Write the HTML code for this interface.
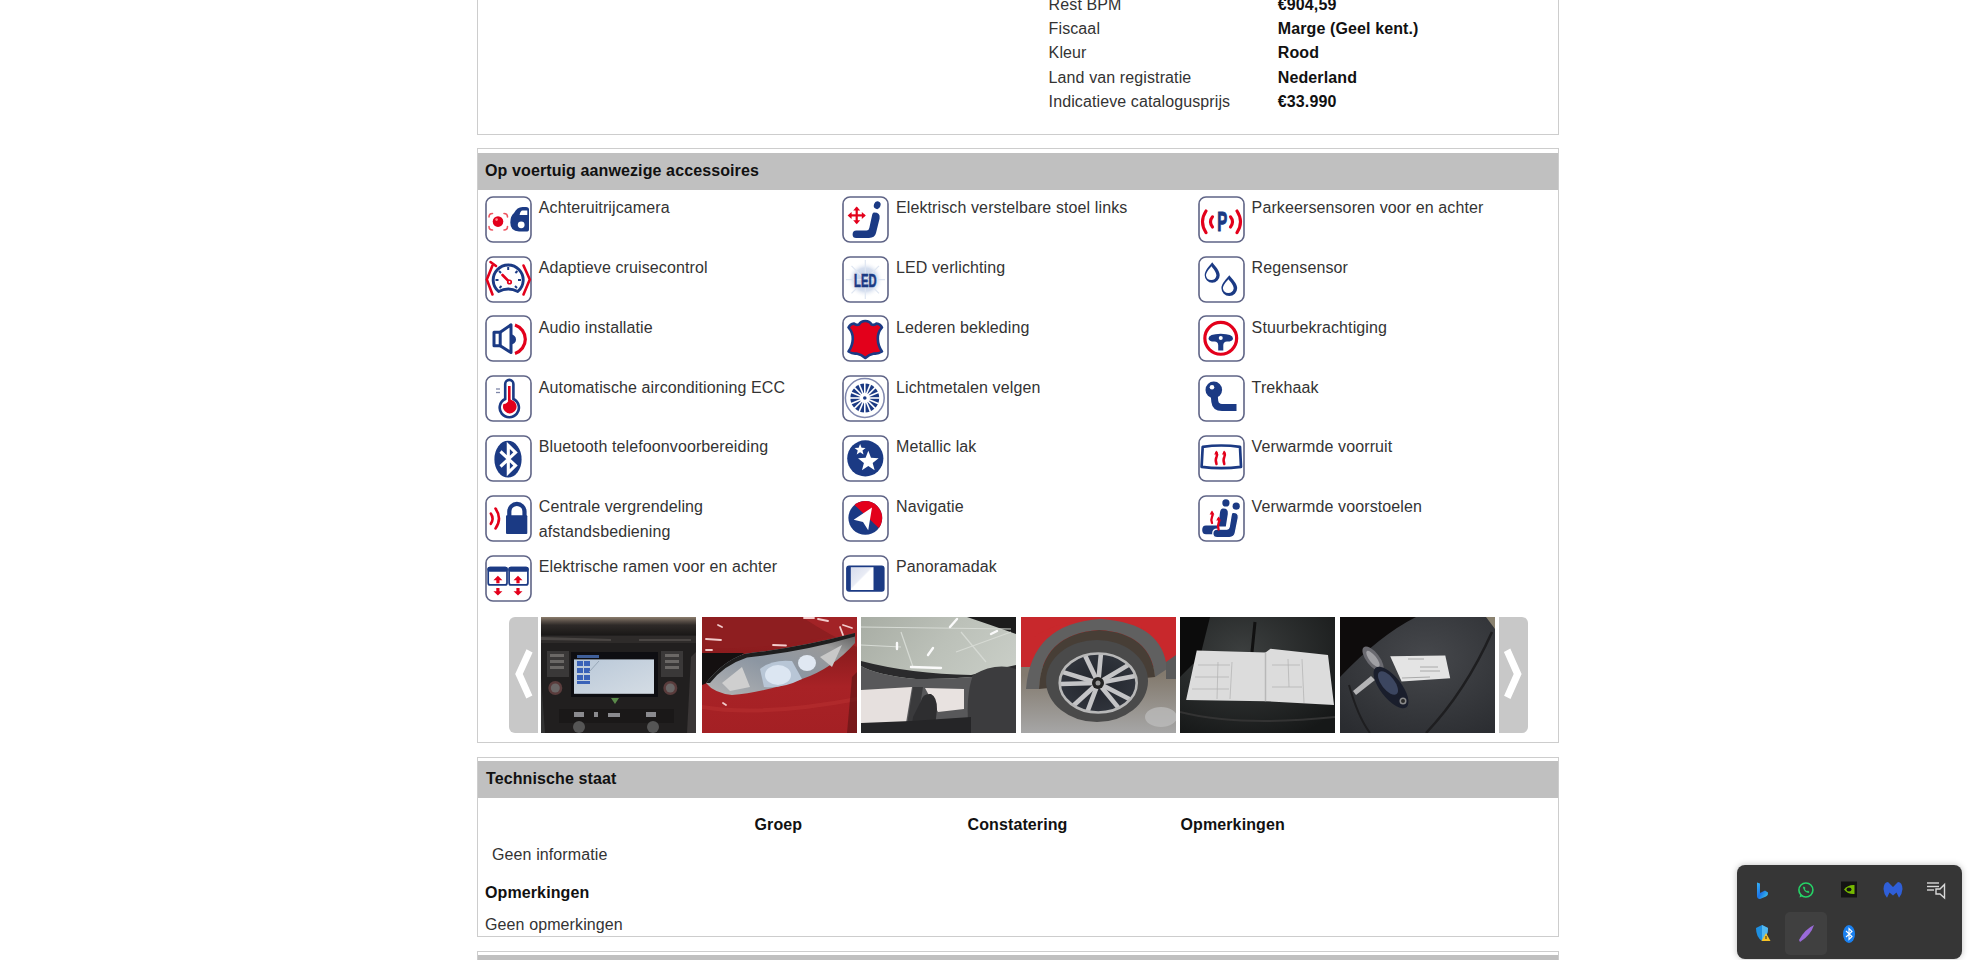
<!DOCTYPE html>
<html><head><meta charset="utf-8">
<style>
html,body{margin:0;padding:0;background:#fff;width:1975px;height:960px;overflow:hidden;position:relative;font-family:"Liberation Sans",sans-serif;font-size:16px;color:#333;letter-spacing:0.11px}
.abs{position:absolute}
.box{position:absolute;left:477px;width:1082px;box-sizing:border-box;border:1px solid #cdcdcd;background:#fff}
.hdr{position:absolute;left:0;right:0;background:#c0c0c0;color:#111;font-weight:bold}
.t{position:absolute;white-space:nowrap;line-height:24.4px}
.lbl{color:#333}
.val{color:#111;font-weight:bold}
.ic{position:absolute;width:47px;height:47px}
.acc{position:absolute;white-space:nowrap;line-height:24.5px;color:#333}
.ph{position:absolute;top:617px;height:116px;width:155px;overflow:hidden}
.nav{position:absolute;top:617px;height:116px;width:29px;background:#c8c8c8}
</style></head><body>
<!-- box 1 -->
<div class="box" style="top:-100px;height:235px"></div>
<div class="t lbl" style="left:1048.6px;top:-7.5px">Rest BPM</div>
<div class="t lbl" style="left:1048.6px;top:16.8px">Fiscaal</div>
<div class="t lbl" style="left:1048.6px;top:41.2px">Kleur</div>
<div class="t lbl" style="left:1048.6px;top:65.5px">Land van registratie</div>
<div class="t lbl" style="left:1048.6px;top:89.8px">Indicatieve catalogusprijs</div>
<div class="t val" style="left:1277.8px;top:-7.5px">€904,59</div>
<div class="t val" style="left:1277.8px;top:16.8px">Marge (Geel kent.)</div>
<div class="t val" style="left:1277.8px;top:41.2px">Rood</div>
<div class="t val" style="left:1277.8px;top:65.5px">Nederland</div>
<div class="t val" style="left:1277.8px;top:89.8px">€33.990</div>

<!-- box 2 -->
<div class="box" style="top:148px;height:595px">
  <div class="hdr" style="top:4px;height:37px"></div>
</div>
<div class="t" style="left:485px;top:159px;font-weight:bold;color:#111">Op voertuig aanwezige accessoires</div>
<div class="ic" style="left:485.4px;top:195.8px"><svg width="47" height="47" viewBox="0 0 47 47"><rect x="1" y="1" width="45" height="45" rx="7" fill="#fff" stroke="#5f6486" stroke-width="1.6"/><g fill="none" stroke="#ee5560" stroke-width="1.6" stroke-linecap="round"><path d="M4,21 Q4,17.5 7.5,17.5"/><path d="M19,17.5 Q22.5,17.5 22.5,21"/><path d="M4,30.5 Q4,34 7.5,34"/><path d="M19,34 Q22.5,34 22.5,30.5"/></g><circle cx="13" cy="25.6" r="5.3" fill="#e3001b"/><circle cx="11.6" cy="23.6" r="1.3" fill="#f88"/><path d="M44,13.5 Q44,11 41,11 L37.5,11 Q32,11 29,17 Q25.3,20 25.3,26.5 Q25.3,35.4 34,35.4 L42.3,35.4 Q44,35.4 44,33.5 Z" fill="#1b3a84"/><path d="M42.3,14.6 L37.5,14.6 Q35.3,14.8 34.6,19.1 L42.3,19.1 Z" fill="#fff"/><circle cx="36.2" cy="28.8" r="3.4" fill="#fff"/></svg></div>
<div class="acc" style="left:538.8px;top:196.1px">Achteruitrijcamera</div>
<div class="ic" style="left:485.4px;top:255.6px"><svg width="47" height="47" viewBox="0 0 47 47"><rect x="1" y="1" width="45" height="45" rx="7" fill="#fff" stroke="#5f6486" stroke-width="1.6"/><path d="M13.6,35.5 A15,15 0 1 1 32.8,35.5 Q23.2,30.5 13.6,35.5 Z" fill="none" stroke="#1b3a84" stroke-width="2.9" stroke-linejoin="round"/><g stroke="#1b3a84" stroke-width="2"><path d="M23.2,11 V14"/><path d="M10.5,24 H13.5"/><path d="M33,24 H36"/><path d="M14,15 L16,17"/><path d="M32.4,15 L30.4,17"/><path d="M14.5,32 L16.5,30"/><path d="M32,32 L30,30"/></g><path d="M17.5,19 L24.5,26" stroke="#e3001b" stroke-width="2.6" stroke-linecap="round"/><circle cx="24.5" cy="26" r="2.6" fill="#e3001b"/><circle cx="24.5" cy="26" r="0.9" fill="#fff"/><g fill="none" stroke="#e3001b" stroke-width="2.6" stroke-linecap="round"><path d="M7.5,9.5 L1.8,23.5 L7.5,38.5"/><path d="M38.5,9.5 L44.8,23.5 L38.5,38.5"/><path d="M5.5,6 L11,10"/></g></svg></div>
<div class="acc" style="left:538.8px;top:255.9px">Adaptieve cruisecontrol</div>
<div class="ic" style="left:485.4px;top:315.4px"><svg width="47" height="47" viewBox="0 0 47 47"><rect x="1" y="1" width="45" height="45" rx="7" fill="#fff" stroke="#5f6486" stroke-width="1.6"/><g fill="none" stroke="#1b3a84" stroke-width="3" stroke-linejoin="round"><rect x="9" y="17.2" width="6.2" height="13.6"/><path d="M15.2,17.2 L26,9.8 L26,37.6 L15.2,30.8"/></g><path d="M26,19.5 A5,5 0 0 1 26,29.5 Z" fill="#1b3a84"/><path d="M30,10 A15,15 0 0 1 30,38.5" fill="none" stroke="#e3001b" stroke-width="3.2"/></svg></div>
<div class="acc" style="left:538.8px;top:315.7px">Audio installatie</div>
<div class="ic" style="left:485.4px;top:375.2px"><svg width="47" height="47" viewBox="0 0 47 47"><rect x="1" y="1" width="45" height="45" rx="7" fill="#fff" stroke="#5f6486" stroke-width="1.6"/><path d="M20.2,24 L20.2,9 A4.1,4.1 0 0 1 28.4,9 L28.4,24 A9.6,9.6 0 1 1 20.2,24 Z" fill="#fff" stroke="#1b3a84" stroke-width="2.6"/><path d="M24.3,11 V26" stroke="#e3001b" stroke-width="2.6"/><path d="M18.5,29 A6.8,6.8 0 1 0 27,25.2 L24.3,24 Q22.5,29 18.5,29 Z" fill="#e3001b"/><g stroke="#7d86a8" stroke-width="1.3"><path d="M11,14 H15"/><path d="M11,17.5 H15"/></g></svg></div>
<div class="acc" style="left:538.8px;top:375.5px">Automatische airconditioning ECC</div>
<div class="ic" style="left:485.4px;top:435.0px"><svg width="47" height="47" viewBox="0 0 47 47"><rect x="1" y="1" width="45" height="45" rx="7" fill="#fff" stroke="#5f6486" stroke-width="1.6"/><ellipse cx="23" cy="24.2" rx="13.6" ry="18.4" fill="#1b3a84"/><path d="M15.5,16.5 L30.5,30.5 L23.3,37.5 V10.5 L30.5,17.5 L15.5,31.5" fill="none" stroke="#fff" stroke-width="3.1" stroke-linejoin="miter"/></svg></div>
<div class="acc" style="left:538.8px;top:435.3px">Bluetooth telefoonvoorbereiding</div>
<div class="ic" style="left:485.4px;top:494.8px"><svg width="47" height="47" viewBox="0 0 47 47"><rect x="1" y="1" width="45" height="45" rx="7" fill="#fff" stroke="#5f6486" stroke-width="1.6"/><path d="M24.3,21 V16.5 A7.6,7.6 0 0 1 39.5,16.5 V21" fill="none" stroke="#1b3a84" stroke-width="4.2"/><rect x="21" y="20.3" width="21.3" height="18.6" rx="1" fill="#1b3a84"/><g fill="none" stroke="#e3001b" stroke-width="2.6" stroke-linecap="round"><path d="M5.8,18.5 Q9.3,23.5 5.8,28.8"/><path d="M10.5,13.5 Q17.5,23.5 10.5,33.5"/></g></svg></div>
<div class="acc" style="left:538.8px;top:495.1px">Centrale vergrendeling<br>afstandsbediening</div>
<div class="ic" style="left:485.4px;top:554.6px"><svg width="47" height="47" viewBox="0 0 47 47"><rect x="1" y="1" width="45" height="45" rx="7" fill="#fff" stroke="#5f6486" stroke-width="1.6"/><g fill="none" stroke="#1b3a84" stroke-width="1.7"><rect x="3.2" y="12.6" width="18.8" height="17.3" rx="2"/><rect x="24.1" y="12.6" width="18.8" height="17.3" rx="2"/></g><rect x="2.4" y="11.8" width="20.4" height="5" rx="2.2" fill="#1b3a84"/><rect x="23.3" y="11.8" width="20.4" height="5" rx="2.2" fill="#1b3a84"/><g fill="#e3001b"><path d="M12.9,20.8 L17.4,25.3 L14.5,25.3 L14.5,28.2 L11.3,28.2 L11.3,25.3 L8.4,25.3 Z"/><path d="M12.9,40.6 L17.4,36.3 L14.5,36.3 L14.5,33 L11.3,33 L11.3,36.3 L8.4,36.3 Z"/><path d="M33,20.8 L37.5,25.3 L34.6,25.3 L34.6,28.2 L31.4,28.2 L31.4,25.3 L28.5,25.3 Z"/><path d="M33,40.6 L37.5,36.3 L34.6,36.3 L34.6,33 L31.4,33 L31.4,36.3 L28.5,36.3 Z"/></g></svg></div>
<div class="acc" style="left:538.8px;top:554.9px">Elektrische ramen voor en achter</div>
<div class="ic" style="left:842.3px;top:195.8px"><svg width="47" height="47" viewBox="0 0 47 47"><rect x="1" y="1" width="45" height="45" rx="7" fill="#fff" stroke="#5f6486" stroke-width="1.6"/><g stroke="#e3001b" stroke-width="2.2"><path d="M7,19.4 H22.4"/><path d="M14.7,11.7 V27.1"/></g><g fill="#e3001b"><path d="M5.6,19.4 L9.6,15.9 L9.6,22.9 Z"/><path d="M23.8,19.4 L19.8,15.9 L19.8,22.9 Z"/><path d="M14.7,10.6 L11.2,14.6 L18.2,14.6 Z"/><path d="M14.7,28.2 L11.2,24.2 L18.2,24.2 Z"/></g><ellipse cx="35.2" cy="9.2" rx="3.3" ry="3.9" transform="rotate(20 35.2 9.2)" fill="#1b3a84"/><path d="M32,16.6 Q38.5,16.5 37.6,22.5 L34,37 Q32.8,41.9 27,41.9 L14.2,41.9 Q10.6,41.9 10.6,38.4 Q10.6,34.6 14.4,34.6 L24.5,34.6 Q26.8,34.6 27.3,32 L29.8,20.5 Q30.4,16.8 32,16.6 Z" fill="#1b3a84"/></svg></div>
<div class="acc" style="left:896.0px;top:196.1px">Elektrisch verstelbare stoel links</div>
<div class="ic" style="left:842.3px;top:255.6px"><svg width="47" height="47" viewBox="0 0 47 47"><rect x="1" y="1" width="45" height="45" rx="7" fill="#fff" stroke="#5f6486" stroke-width="1.6"/><defs><radialGradient id="lg"><stop offset="0" stop-color="#b9c7e2"/><stop offset="0.65" stop-color="#d6dfef"/><stop offset="1" stop-color="#fff" stop-opacity="0"/></radialGradient></defs><circle cx="23.3" cy="23.6" r="18" fill="url(#lg)"/><g stroke="#dfe6f2" stroke-width="1.2"><path d="M23.3,4 V43"/><path d="M4,23.6 H43"/><path d="M9.5,9.8 L37,37.4"/><path d="M37,9.8 L9.5,37.4"/></g><text x="23.3" y="30.6" text-anchor="middle" font-family="Liberation Sans" font-weight="bold" font-size="17.5" fill="#1b3a84" stroke="#1b3a84" stroke-width="0.7" textLength="22.5" lengthAdjust="spacingAndGlyphs" transform="translate(23.3 0) scale(1 1) translate(-23.3 0)">LED</text></svg></div>
<div class="acc" style="left:896.0px;top:255.9px">LED verlichting</div>
<div class="ic" style="left:842.3px;top:315.4px"><svg width="47" height="47" viewBox="0 0 47 47"><rect x="1" y="1" width="45" height="45" rx="7" fill="#fff" stroke="#5f6486" stroke-width="1.6"/><path d="M17,9.5 Q19,6 23.3,6 Q27.5,6 29.5,9.5 Q32.5,10.5 34.5,8.5 Q38.5,9 40,12.5 Q35.5,17.5 35.8,24 Q36,31 40,36.5 Q36,39 32,38.5 Q27,39.5 23.3,43 Q19.5,39.5 14.5,38.5 Q10.5,39 6.5,36.5 Q10.5,31 10.8,24 Q11,17.5 6.5,12.5 Q8,9 12,8.5 Q14,10.5 17,9.5 Z" fill="#e3001b" stroke="#1b3a84" stroke-width="2.6" stroke-linejoin="round"/></svg></div>
<div class="acc" style="left:896.0px;top:315.7px">Lederen bekleding</div>
<div class="ic" style="left:842.3px;top:375.2px"><svg width="47" height="47" viewBox="0 0 47 47"><rect x="1" y="1" width="45" height="45" rx="7" fill="#fff" stroke="#5f6486" stroke-width="1.6"/><circle cx="22.8" cy="23" r="19.4" fill="none" stroke="#8088ae" stroke-width="1.5"/><circle cx="22.8" cy="23" r="14.4" fill="#1b3a84"/><path d="M22.8,23 L37.80,23.00" stroke="#fff" stroke-width="1.6"/><path d="M22.8,23 L36.66,28.74" stroke="#fff" stroke-width="1.6"/><path d="M22.8,23 L33.41,33.61" stroke="#fff" stroke-width="1.6"/><path d="M22.8,23 L28.54,36.86" stroke="#fff" stroke-width="1.6"/><path d="M22.8,23 L22.80,38.00" stroke="#fff" stroke-width="1.6"/><path d="M22.8,23 L17.06,36.86" stroke="#fff" stroke-width="1.6"/><path d="M22.8,23 L12.19,33.61" stroke="#fff" stroke-width="1.6"/><path d="M22.8,23 L8.94,28.74" stroke="#fff" stroke-width="1.6"/><path d="M22.8,23 L7.80,23.00" stroke="#fff" stroke-width="1.6"/><path d="M22.8,23 L8.94,17.26" stroke="#fff" stroke-width="1.6"/><path d="M22.8,23 L12.19,12.39" stroke="#fff" stroke-width="1.6"/><path d="M22.8,23 L17.06,9.14" stroke="#fff" stroke-width="1.6"/><path d="M22.8,23 L22.80,8.00" stroke="#fff" stroke-width="1.6"/><path d="M22.8,23 L28.54,9.14" stroke="#fff" stroke-width="1.6"/><path d="M22.8,23 L33.41,12.39" stroke="#fff" stroke-width="1.6"/><path d="M22.8,23 L36.66,17.26" stroke="#fff" stroke-width="1.6"/><circle cx="22.8" cy="23" r="5" fill="#fff"/><circle cx="22.8" cy="23" r="1.8" fill="#1b3a84"/></svg></div>
<div class="acc" style="left:896.0px;top:375.5px">Lichtmetalen velgen</div>
<div class="ic" style="left:842.3px;top:435.0px"><svg width="47" height="47" viewBox="0 0 47 47"><rect x="1" y="1" width="45" height="45" rx="7" fill="#fff" stroke="#5f6486" stroke-width="1.6"/><circle cx="23.3" cy="23.35" r="18.1" fill="#1b3a84"/><polygon points="18.10,9.00 19.57,12.78 23.62,13.01 20.48,15.57 21.51,19.49 18.10,17.30 14.69,19.49 15.72,15.57 12.58,13.01 16.63,12.78" fill="#fff"/><polygon points="26.30,15.70 29.00,22.78 36.57,23.16 30.67,27.92 32.65,35.24 26.30,31.10 19.95,35.24 21.93,27.92 16.03,23.16 23.60,22.78" fill="#fff"/></svg></div>
<div class="acc" style="left:896.0px;top:435.3px">Metallic lak</div>
<div class="ic" style="left:842.3px;top:494.8px"><svg width="47" height="47" viewBox="0 0 47 47"><rect x="1" y="1" width="45" height="45" rx="7" fill="#fff" stroke="#5f6486" stroke-width="1.6"/><defs><clipPath id="nc"><circle cx="23.3" cy="22.95" r="16.9"/></clipPath></defs><g clip-path="url(#nc)"><rect x="0" y="0" width="47" height="47" fill="#1b3a84"/><path d="M10,6 L47,6 L47,45 Z" fill="#e3001b" transform="rotate(-3 23 23)"/></g><path d="M30,12.5 L11.7,24.7 L21,27 L26.2,35.2 Z" fill="#fff"/></svg></div>
<div class="acc" style="left:896.0px;top:495.1px">Navigatie</div>
<div class="ic" style="left:842.3px;top:554.6px"><svg width="47" height="47" viewBox="0 0 47 47"><rect x="1" y="1" width="45" height="45" rx="7" fill="#fff" stroke="#5f6486" stroke-width="1.6"/><rect x="4.1" y="10.5" width="38.5" height="26.2" rx="3" fill="#1b3a84"/><defs><linearGradient id="pg" x1="0" y1="0" x2="1" y2="1"><stop offset="0" stop-color="#d7dcec"/><stop offset="0.45" stop-color="#e9ecf5"/><stop offset="0.5" stop-color="#fff"/></linearGradient></defs><rect x="8.8" y="12.2" width="22.7" height="22.8" fill="url(#pg)"/></svg></div>
<div class="acc" style="left:896.0px;top:554.9px">Panoramadak</div>
<div class="ic" style="left:1198.3px;top:195.8px"><svg width="47" height="47" viewBox="0 0 47 47"><rect x="1" y="1" width="45" height="45" rx="7" fill="#fff" stroke="#5f6486" stroke-width="1.6"/><g fill="none" stroke="#e3001b" stroke-width="3.1" stroke-linecap="round"><path d="M8,15 Q1,25.8 8,36.6"/><path d="M14.5,20.8 Q10.5,25.8 14.5,31"/><path d="M39,15 Q46,25.8 39,36.6"/><path d="M32.5,20.8 Q36.5,25.8 32.5,31"/></g><text x="24.3" y="35" text-anchor="middle" font-family="Liberation Sans" font-weight="bold" font-size="27" fill="#1b3a84" stroke="#1b3a84" stroke-width="1.1" textLength="10" lengthAdjust="spacingAndGlyphs">P</text></svg></div>
<div class="acc" style="left:1251.6px;top:196.1px">Parkeersensoren voor en achter</div>
<div class="ic" style="left:1198.3px;top:255.6px"><svg width="47" height="47" viewBox="0 0 47 47"><rect x="1" y="1" width="45" height="45" rx="7" fill="#fff" stroke="#5f6486" stroke-width="1.6"/><path d="M14.2,6.3 C17,10 21.7,14.5 21.7,19.2 A7.5,7.5 0 0 1 6.7,19.2 C6.7,14.5 11.4,10 14.2,6.3 Z" fill="#1b3a84"/><path d="M13.4,10.2 C15.2,12.6 18.4,15.8 18.4,19.7 A5.3,5.3 0 0 1 8,19.7 C8,15.8 11.6,12.6 13.4,10.2 Z" fill="#fff"/><path d="M31.3,19.2 C34.3,23 39.2,27.5 39.2,32.1 A7.9,7.9 0 0 1 23.4,32.1 C23.4,27.5 28.3,23 31.3,19.2 Z" fill="#1b3a84"/><path d="M30.4,23.3 C32.3,25.8 35.7,29 35.7,32.6 A5.5,5.5 0 0 1 24.9,32.6 C24.9,29 28.5,25.8 30.4,23.3 Z" fill="#fff"/></svg></div>
<div class="acc" style="left:1251.6px;top:255.9px">Regensensor</div>
<div class="ic" style="left:1198.3px;top:315.4px"><svg width="47" height="47" viewBox="0 0 47 47"><rect x="1" y="1" width="45" height="45" rx="7" fill="#fff" stroke="#5f6486" stroke-width="1.6"/><circle cx="22.75" cy="23.35" r="15.9" fill="none" stroke="#e3001b" stroke-width="3.2"/><path d="M10.5,23.5 Q10.5,19 22.75,18.7 Q35,19 35,23.5 Q35,26.6 29,26.6 Q25.5,26.8 25.3,30 L25.3,35.6 L20.2,35.6 L20.2,30 Q20,26.8 16.5,26.6 Q10.5,26.6 10.5,23.5 Z" fill="#1b3a84"/><circle cx="22.75" cy="22.9" r="2" fill="#fff"/></svg></div>
<div class="acc" style="left:1251.6px;top:315.7px">Stuurbekrachtiging</div>
<div class="ic" style="left:1198.3px;top:375.2px"><svg width="47" height="47" viewBox="0 0 47 47"><rect x="1" y="1" width="45" height="45" rx="7" fill="#fff" stroke="#5f6486" stroke-width="1.6"/><path d="M16,18 L16.8,26.5 Q17.5,32.4 24,32.4 L38.5,32.4" fill="none" stroke="#1b3a84" stroke-width="7"/><circle cx="15.8" cy="14.9" r="8.3" fill="#1b3a84"/><circle cx="14" cy="12.2" r="2.3" fill="#fff"/></svg></div>
<div class="acc" style="left:1251.6px;top:375.5px">Trekhaak</div>
<div class="ic" style="left:1198.3px;top:435.0px"><svg width="47" height="47" viewBox="0 0 47 47"><rect x="1" y="1" width="45" height="45" rx="7" fill="#fff" stroke="#5f6486" stroke-width="1.6"/><path d="M4.7,11.8 Q23,9.2 42,11.8 L43,31.8 Q23,34.6 3.6,31.8 Z" fill="none" stroke="#1b3a84" stroke-width="2.7" stroke-linejoin="round"/><g fill="none" stroke="#e3001b" stroke-width="2.5" stroke-linecap="round"><path d="M18.5,29 Q17,25 18.5,22 Q19.5,19.5 18.5,17.5"/><path d="M26.3,29 Q24.8,25 26.3,22 Q27.3,19.5 26.3,17.5"/></g><g fill="#e3001b"><path d="M18.3,15.6 L16.2,19.5 L20.4,19.5 Z"/><path d="M26.1,15.6 L24,19.5 L28.2,19.5 Z"/></g></svg></div>
<div class="acc" style="left:1251.6px;top:435.3px">Verwarmde voorruit</div>
<div class="ic" style="left:1198.3px;top:494.8px"><svg width="47" height="47" viewBox="0 0 47 47"><rect x="1" y="1" width="45" height="45" rx="7" fill="#fff" stroke="#5f6486" stroke-width="1.6"/><circle cx="27.9" cy="7.9" r="3.6" fill="#1b3a84"/><circle cx="38.2" cy="11.2" r="3.6" fill="#1b3a84"/><path d="M24.5,13.6 Q30.5,13.2 29.8,19 L27.8,31.5 L20.5,31.5 L21.8,19 Q22.2,14 24.5,13.6 Z" fill="#1b3a84"/><path d="M8,30.6 L18.5,30.6 Q21,30.6 21,34.8 Q21,39.2 16.5,39.2 L8,39.2 Q4.2,39.2 4.2,35 Q4.2,30.6 8,30.6 Z" fill="#1b3a84"/><path d="M34.8,17.4 Q41,17 40.3,23 L37.3,38 Q36.4,42.6 31.5,42.6 L19.2,42.6 Q14.8,42.6 14.8,38.4 Q14.8,34.2 19.2,34.2 L29,34.2 Q30.8,34.2 31.2,32 L33,21 Q33.3,17.6 34.8,17.4 Z" fill="#1b3a84" stroke="#fff" stroke-width="1.3"/><g stroke="#e3001b" stroke-width="2.3" fill="none" stroke-linecap="round"><path d="M14,28 Q12.8,24.5 14,22 Q15.2,19.5 14,17.8"/><path d="M20.6,34.5 Q19.4,30.5 20.6,28 Q21.8,25.5 20.6,23.8"/></g><g fill="#e3001b"><path d="M14,15.6 L11.6,19.6 L16.4,19.6 Z"/><path d="M20.6,21.6 L18.2,25.6 L23,25.6 Z"/></g></svg></div>
<div class="acc" style="left:1251.6px;top:495.1px">Verwarmde voorstoelen</div>
<!-- gallery -->
<div class="nav" style="left:509px;border-radius:6px 0 0 6px"><svg width="29" height="116"><polygon points="17.5,32.3 23.6,35.5 13.8,56.9 23.4,78.6 17.3,81.6 6.2,56.9" fill="#fff"/></svg></div>
<div class="nav" style="left:1499.2px;border-radius:0 6px 6px 0"><svg width="29" height="116"><polygon points="4.9,35 11.3,31.6 22.6,56.9 11.5,82 5.1,78.8 14.7,56.9" fill="#fff"/></svg></div>
<!-- photo 1: dashboard -->
<div class="ph" style="left:541.3px"><svg width="155" height="116" viewBox="0 0 155 116">
<defs><linearGradient id="p1top" x1="0" y1="0" x2="0" y2="1"><stop offset="0" stop-color="#8c7e6e"/><stop offset="0.22" stop-color="#5a5048"/><stop offset="0.45" stop-color="#2e2a28"/><stop offset="1" stop-color="#1a1817"/></linearGradient>
<linearGradient id="p1scr" x1="0" y1="0" x2="1" y2="1"><stop offset="0" stop-color="#b9c8d8"/><stop offset="1" stop-color="#d4dce4"/></linearGradient></defs>
<rect width="155" height="116" fill="#211f1f"/>
<rect width="155" height="18" fill="url(#p1top)"/>
<path d="M0,19 L155,19 L155,26 L0,26 Z" fill="#2e2b2a"/>
<path d="M0,20 L70,22 L70,24 L0,23Z" fill="#4a4644"/><path d="M98,22 L150,22 L150,24 L98,24Z" fill="#4a4644"/>
<rect x="6" y="34" width="22" height="26" fill="#3a3838"/>
<rect x="120" y="34" width="22" height="26" fill="#3a3838"/>
<g fill="#6b6866"><rect x="9" y="37" width="14" height="3"/><rect x="9" y="43" width="14" height="3"/><rect x="9" y="49" width="14" height="3"/><rect x="124" y="37" width="14" height="3"/><rect x="124" y="43" width="14" height="3"/><rect x="124" y="49" width="14" height="3"/></g>
<rect x="30" y="35" width="87" height="45" fill="#0e0e12"/>
<rect x="33" y="42.4" width="80" height="34.4" fill="url(#p1scr)"/>
<rect x="36" y="38" width="22" height="3" fill="#3f5f9a"/>
<g fill="#3a62b8"><rect x="36" y="44" width="6" height="5"/><rect x="43" y="44" width="6" height="5"/><rect x="36" y="51" width="6" height="5"/><rect x="43" y="51" width="6" height="5"/><rect x="36" y="58" width="6" height="5"/><rect x="43" y="58" width="6" height="5"/><rect x="36" y="64" width="13" height="3"/></g>
<path d="M48,55 L58,44" stroke="#98a8b8" stroke-width="1"/>
<circle cx="14.3" cy="71" r="7" fill="#5a3c3c"/><circle cx="14.3" cy="71" r="4.5" fill="#6a6666"/>
<circle cx="129.3" cy="71" r="7" fill="#5a3c3c"/><circle cx="129.3" cy="71" r="4.5" fill="#6a6666"/>
<path d="M70,81 L78,81 L74,87 Z" fill="#5a8a4a"/>
<rect x="18" y="92" width="115" height="14" fill="#1a1818"/>
<g fill="#8a8a8e"><rect x="33" y="95" width="10" height="5"/><rect x="53" y="95" width="4" height="5"/><rect x="67" y="96" width="12" height="4"/><rect x="105" y="95" width="10" height="5"/></g>
<circle cx="38" cy="110" r="6" fill="#555"/><circle cx="112" cy="110" r="6" fill="#555"/>
<path d="M0,60 L4,116 L0,116 Z" fill="#333"/><path d="M150,40 L155,35 L155,116 L146,116 Z" fill="#3a3636"/>
</svg></div>
<!-- photo 2: headlight -->
<div class="ph" style="left:701.8px"><svg width="155" height="116" viewBox="0 0 155 116">
<defs><linearGradient id="p2bg" x1="0" y1="0" x2="0" y2="1"><stop offset="0" stop-color="#9a2024"/><stop offset="0.3" stop-color="#8c1c1e"/><stop offset="0.6" stop-color="#a82226"/><stop offset="1" stop-color="#a42024"/></linearGradient>
<linearGradient id="p2hl" x1="0" y1="1" x2="1" y2="0"><stop offset="0" stop-color="#b4b4b4"/><stop offset="0.45" stop-color="#8c96a2"/><stop offset="0.8" stop-color="#9a9a9a"/><stop offset="1" stop-color="#5a5a5a"/></linearGradient></defs>
<rect width="155" height="116" fill="url(#p2bg)"/>
<path d="M0,30 Q60,36 153,14 L155,14 L155,0 L0,0 Z" fill="#8e1e20"/><path d="M100,0 L155,0 L155,30 Q130,20 100,0 Z" fill="#a82428" opacity="0.8"/>
<path d="M0,36 L42,36 L5,66 L0,68 Z" fill="#141010"/>
<path d="M4,66 Q20,45 42,37 Q100,30 153,16 L153,26 Q130,52 100,62 Q60,76 30,78 Q12,76 4,66 Z" fill="url(#p2hl)"/>
<path d="M4,66 Q20,45 42,37 Q100,30 153,16 L153,19.5 Q100,35 45,40.5 Q22,48 8,66 Z" fill="#1e1e1e"/>
<path d="M20,66 L40,50 L48,70 L28,74 Z" fill="#cfcfcf"/>
<path d="M58,52 Q70,42 90,44 L100,62 Q80,72 62,70 Z" fill="#b8c6d6"/>
<ellipse cx="76" cy="58" rx="13" ry="10" fill="#dce6f2"/>
<ellipse cx="105" cy="46" rx="9" ry="8" fill="#e0e8f2"/>
<path d="M118,40 L140,28 L130,50 Z" fill="#c8c8c8"/>
<g stroke="#f2cccc" stroke-width="1.8" stroke-linecap="round"><path d="M4,22 L19,23"/><path d="M71,28 L84,28.5"/><path d="M16,8 L20,10"/><path d="M150,11 L141,8"/><path d="M138,10 L141,18"/><path d="M126,4 L116,2"/><path d="M102,1 L112,1"/><path d="M21,86 L24,88"/><path d="M4,33 L10,33"/></g>
<path d="M0,88 Q60,98 155,80 L155,84 Q60,102 0,92 Z" fill="#b83232" opacity="0.55"/>
<path d="M150,60 L155,55 L155,116 L145,116 Z" fill="#5a1414" opacity="0.6"/>
</svg></div>
<!-- photo 3: panorama roof -->
<div class="ph" style="left:860.5px"><svg width="155" height="116" viewBox="0 0 155 116">
<defs><linearGradient id="p3g" x1="0" y1="0" x2="1" y2="0.6"><stop offset="0" stop-color="#a8ada4"/><stop offset="0.5" stop-color="#bcc1b9"/><stop offset="1" stop-color="#cbd0c9"/></linearGradient></defs>
<rect width="155" height="116" fill="url(#p3g)"/>
<path d="M106,0 L155,0 L155,17 Q130,8 106,0 Z" fill="#1c1c1c"/>
<g stroke="#d6dad4" stroke-width="1.2" fill="none"><path d="M0,10 L150,12"/><path d="M40,15 L52,50"/><path d="M95,35 L150,15"/><path d="M100,15 L125,45"/><path d="M0,28 L40,30"/></g>
<g stroke="#fafafa" stroke-width="2.4" stroke-linecap="round"><path d="M89,10 L96,2"/><path d="M67,38 L72,31"/><path d="M36,32 L36,26"/><path d="M130,17 L136,14"/><path d="M50,50 L80,51"/></g>
<path d="M0,44 Q50,57 110,58 L155,48 L155,53 Q110,63 55,62 Q15,58 0,49 Z" fill="#2a2a2c"/>
<path d="M0,49 Q15,58 55,62 Q110,63 155,53 L155,116 L0,116 Z" fill="#58585a"/>
<path d="M0,73 L51,70 L45,106 L0,108 Z" fill="#e6e0de"/>
<path d="M64,71 L103,72 L103,92 L77,95 Z" fill="#e8e2e0"/>
<path d="M52,70 L62,70 L56,108 L46,108 Z" fill="#3a3a3c"/>
<path d="M60,84 Q62,76 70,77 Q76,80 76,92 L74,110 L50,116 L52,100 Z" fill="#2e2e30"/>
<path d="M112,58 Q135,45 155,52 L155,116 L108,116 Q104,80 112,58 Z" fill="#3c3c3e"/>
<path d="M0,106 L50,104 L110,100 L110,116 L0,116 Z" fill="#252527"/>
</svg></div>
<!-- photo 4: wheel -->
<div class="ph" style="left:1020.8px"><svg width="155" height="116" viewBox="0 0 155 116">
<defs><linearGradient id="p4gr" x1="0" y1="0" x2="0" y2="1"><stop offset="0.5" stop-color="#837a6e"/><stop offset="1" stop-color="#a6a6a6"/></linearGradient>
<radialGradient id="p4rim"><stop offset="0" stop-color="#22252c"/><stop offset="1" stop-color="#30343c"/></radialGradient></defs>
<rect width="155" height="116" fill="url(#p4gr)"/>
<rect width="155" height="50" fill="#c8282c"/>
<path d="M0,75 L0,40 Q10,5 80,2 Q140,5 145,45 L155,48 L155,0 L0,0 Z" fill="#c8282c"/>
<path d="M5,72 Q10,6 80,2 Q142,6 146,52 L134,60 Q130,16 78,13 Q20,17 18,72 Z" fill="#606060"/>
<path d="M145,45 L155,38 L155,62 L145,62 Z" fill="#5a5a5a"/>
<path d="M18,72 Q20,17 78,13 Q130,16 134,60 Z" fill="#473e36"/>
<ellipse cx="76" cy="64" rx="51" ry="41" fill="#4a4a4a"/>
<ellipse cx="77.2" cy="66" rx="39" ry="30" fill="url(#p4rim)"/>
<g stroke="#c4c4c6" stroke-width="4.6" stroke-linecap="butt"><path d="M77.2,66 L79.9,37.1"/><path d="M77.2,66 L107.1,48.1"/><path d="M77.2,66 L114.1,59.0"/><path d="M77.2,66 L108.7,82.2"/><path d="M77.2,66 L97.3,90.6"/><path d="M77.2,66 L66.7,93.9"/><path d="M77.2,66 L52.8,88.2"/><path d="M77.2,66 L39.2,67.0"/><path d="M77.2,66 L42.0,55.1"/><path d="M77.2,66 L64.2,38.7"/></g>
<ellipse cx="77.2" cy="66" rx="38.5" ry="29.5" fill="none" stroke="#b8b8b8" stroke-width="2.6"/>
<circle cx="77" cy="66" r="6" fill="#222"/><circle cx="77" cy="66" r="2.5" fill="#999"/>
<ellipse cx="140" cy="100" rx="16" ry="10" fill="#bfbfbf" opacity="0.7"/>
</svg></div>
<!-- photo 5: booklet -->
<div class="ph" style="left:1180px"><svg width="155" height="116" viewBox="0 0 155 116">
<defs><radialGradient id="p5bg" cx="0.4" cy="0.3" r="0.8"><stop offset="0" stop-color="#3c3f3f"/><stop offset="1" stop-color="#161818"/></radialGradient></defs>
<rect width="155" height="116" fill="url(#p5bg)"/>
<path d="M0,0 L30,0 L20,40 L0,60 Z" fill="#0c0c0c"/>
<path d="M75,5 L72,35" stroke="#111" stroke-width="3"/>
<path d="M16.75,33.6 L85.5,35.5 L90.5,31.75 L148,38 L154,88 L85.5,84.25 L6.1,83 Z" fill="#dcdcdc"/>
<path d="M85.5,35.5 L85.5,84.25" stroke="#b8b8b8" stroke-width="1.5"/>
<g stroke="#b0b0b0" stroke-width="0.7" fill="none"><path d="M52,45 L50,82"/><path d="M122,42 L124,86"/><path d="M18,48 L50,48"/><path d="M15,60 L49,60"/><path d="M12,72 L49,72"/><path d="M92,48 L120,48"/><path d="M92,70 L122,70"/><path d="M38,45 L37,82"/><path d="M108,42 L109,70"/></g>
<path d="M0,95 Q60,110 155,100" stroke="#333" stroke-width="2" fill="none"/>
</svg></div>
<!-- photo 6: keys -->
<div class="ph" style="left:1340.1px"><svg width="155" height="116" viewBox="0 0 155 116">
<defs><radialGradient id="p6bg" cx="0.55" cy="0.35" r="0.8"><stop offset="0" stop-color="#46484c"/><stop offset="1" stop-color="#2a2c30"/></radialGradient></defs>
<rect width="155" height="116" fill="url(#p6bg)"/>
<path d="M0,0 L76,0 Q40,18 0,60 Z" fill="#0e0c0c"/>
<path d="M146,0 L155,0 L155,12 Z" fill="#8a8270"/>
<path d="M9,68 Q18,100 30,116" stroke="#1e1e20" stroke-width="2" fill="none"/>
<path d="M152,15 Q125,75 86,116" stroke="#1e1e20" stroke-width="2.5" fill="none"/>
<path d="M50.2,39.3 L105.3,38.5 L110.2,61.2 L61.6,64.4 Z" fill="#e4e4e4"/>
<g stroke="#9a9a9a" stroke-width="0.8"><path d="M68,42 L84,42"/><path d="M80,50 L98,50"/><path d="M80,54 L100,54"/><path d="M62,61 L90,60"/></g>
<path d="M13,74 L31,59 L35,63 L16,78 Z" fill="#b4b4b6"/>
<ellipse cx="33" cy="42" rx="15" ry="6.5" transform="rotate(52 33 42)" fill="#6a6a70"/>
<ellipse cx="33" cy="42" rx="10" ry="3.5" transform="rotate(52 33 42)" fill="#a0a0a4"/>
<ellipse cx="51" cy="70.5" rx="25" ry="10.5" transform="rotate(52 51 70.5)" fill="#1a1e2c"/>
<ellipse cx="48" cy="66" rx="14" ry="6.5" transform="rotate(52 48 66)" fill="#3c4660"/>
<circle cx="63" cy="84" r="3.5" fill="#8a8a8a"/><circle cx="63" cy="84" r="2" fill="#2a2a2a"/>
</svg></div>

<!-- box 3 -->
<div class="box" style="top:757px;height:180px">
  <div class="hdr" style="top:3px;height:37px"></div>
</div>
<div class="t" style="left:486px;top:767px;font-weight:bold;color:#111">Technische staat</div>
<div class="t" style="left:754.5px;top:812.5px;font-weight:bold;color:#111">Groep</div>
<div class="t" style="left:967.5px;top:812.5px;font-weight:bold;color:#111">Constatering</div>
<div class="t" style="left:1180.5px;top:812.5px;font-weight:bold;color:#111">Opmerkingen</div>
<div class="t lbl" style="left:492px;top:842.5px">Geen informatie</div>
<div class="t" style="left:485px;top:880.5px;font-weight:bold;color:#111">Opmerkingen</div>
<div class="t lbl" style="left:485px;top:912.5px">Geen opmerkingen</div>
<!-- box 4 -->
<div class="box" style="top:951px;height:40px">
  <div class="hdr" style="top:3px;height:37px"></div>
</div>
<div class="abs" style="left:1737px;top:865px;width:225px;height:94px;background:#363636;border-radius:8px;box-shadow:0 0 6px rgba(0,0,0,0.25)"></div>
<div class="abs" style="left:1785px;top:912px;width:42px;height:43px;background:#404040;border-radius:5px"></div>
<svg class="abs" style="left:1737px;top:865px" width="225" height="94" viewBox="0 0 225 94">
<defs><linearGradient id="bing" x1="0" y1="0" x2="1" y2="1"><stop offset="0" stop-color="#37b6f6"/><stop offset="0.5" stop-color="#1a73e8"/><stop offset="1" stop-color="#45d4e8"/></linearGradient></defs>
<path d="M20,17.5 L23,18.5 L23,28 L28,25.5 L31,27.5 Q31.5,30 29,31.5 L23,34 Q20,34 20,31 Z" fill="url(#bing)"/>
<circle cx="68.9" cy="25" r="7" fill="none" stroke="#25d366" stroke-width="1.6"/><path d="M62.5,32.5 L63.5,28.5 L66,31 Z" fill="#25d366"/>
<path d="M66,22 Q66.5,27 71.5,28 L72.5,27 L71,25.5 L70,26.3 Q68.5,25.5 67.7,24 L68.5,23 L67,21.5 Z" fill="#25d366"/>
<rect x="104" y="16.5" width="16" height="16" fill="#141414"/>
<path d="M107,24.5 Q111,19.5 117.5,20 L117.5,29 Q111,29.5 107,24.5 Z" fill="#76b900"/><ellipse cx="112" cy="24.5" rx="2.5" ry="2" fill="#141414"/>
<path d="M146.5,24 Q146.8,17 151,17 L156,22 L161,17 Q165.2,17 165.5,24 Q165.2,29 162,32.8 L159.5,27.5 L156,30.5 L152.5,27.5 L150,32.8 Q146.8,29 146.5,24 Z" fill="#2f5fd8"/>
<g stroke="#d8d8d8" stroke-width="1.4"><path d="M190,18 H202"/><path d="M190,21.5 H202"/><path d="M190,25 H197"/></g>
<path d="M199,24 L203,24 L207.5,19.5 L207.5,33 L203,29 L199,29 Z" fill="none" stroke="#d8d8d8" stroke-width="1.4"/>
<path d="M19,63 L25,60 L31,63 Q31,72 25,76 Q19,72 19,63 Z" fill="#1e8fe0"/><path d="M25,60 L31,63 Q31,72 25,76 Z" fill="#52b8f0"/>
<path d="M29,68 L33.5,76 L24.5,76 Z" fill="#f7c325"/><path d="M29,71 V74" stroke="#222" stroke-width="1"/>
<path d="M62,75 Q68,64 77,60 Q74,70 63,77 Z" fill="#9a6ad8"/>
<ellipse cx="112" cy="69" rx="6" ry="9" fill="#1a80f0"/>
<path d="M109,66 L115,71.5 L112,74.5 V63.5 L115,66.5 L109,72" fill="none" stroke="#fff" stroke-width="1.1"/>
</svg>

</body></html>
